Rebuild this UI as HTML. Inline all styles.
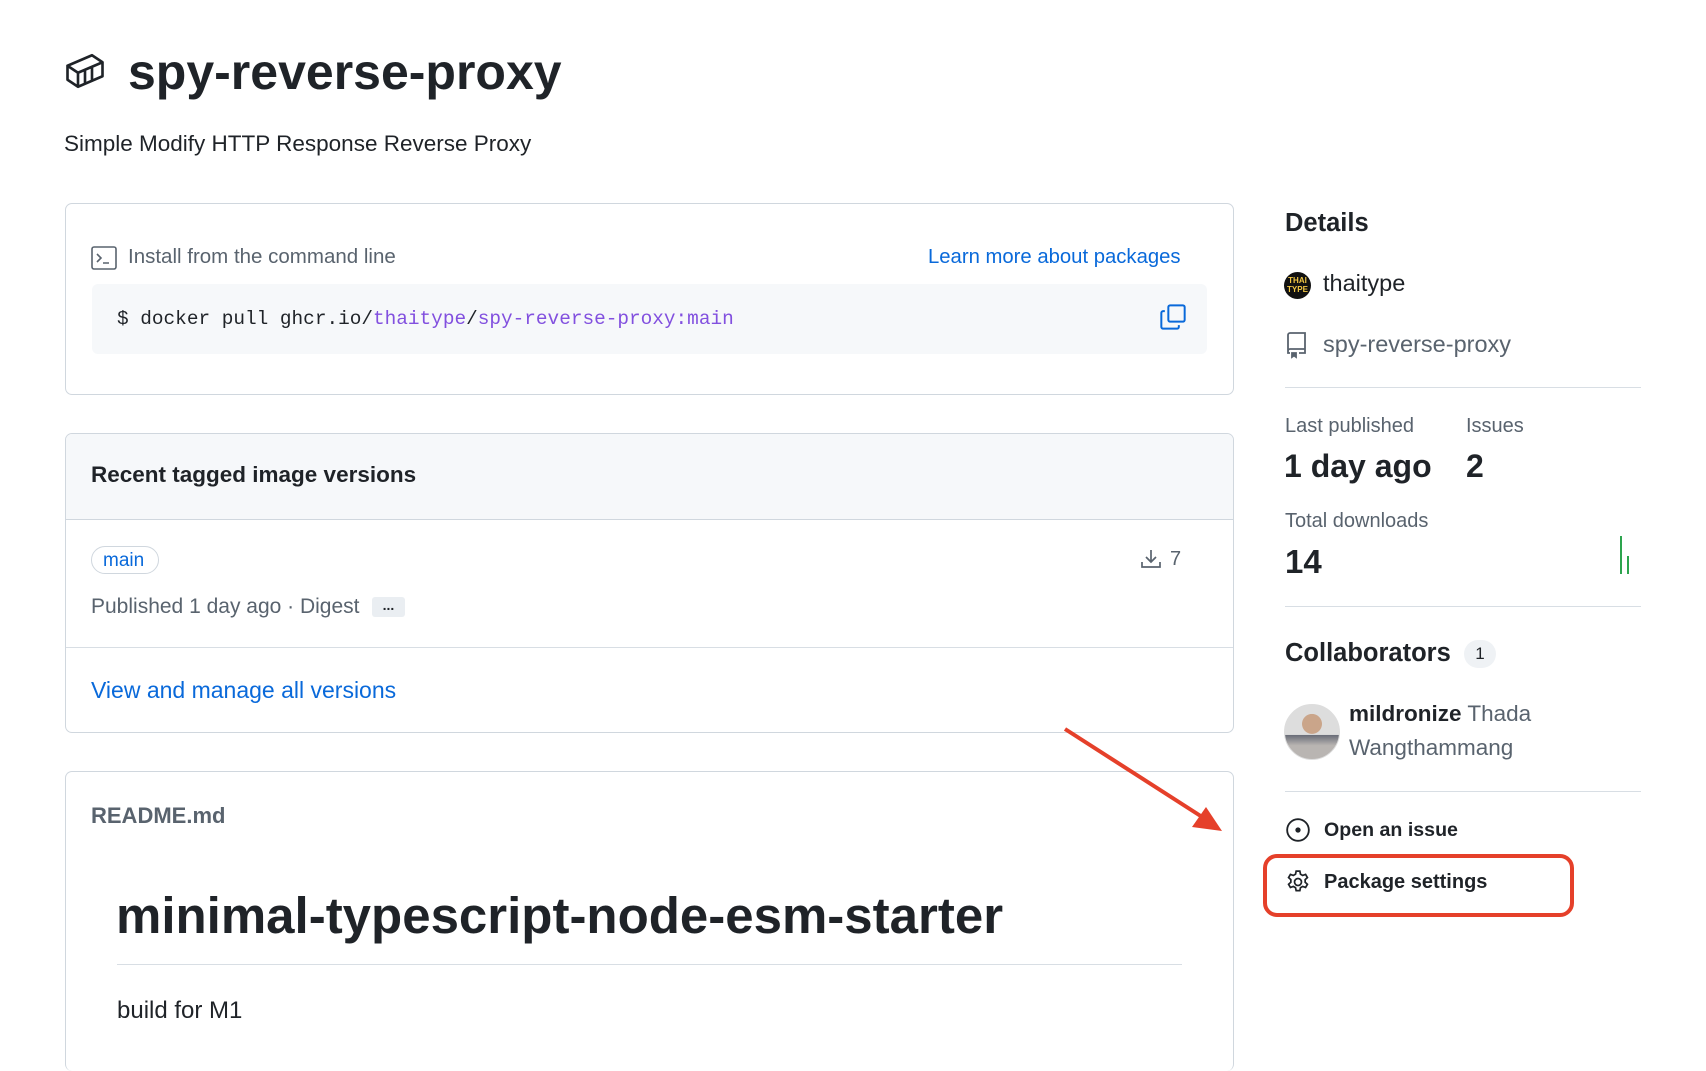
<!DOCTYPE html><html><head><meta charset="utf-8"><style>
body{margin:0;width:1706px;height:1034px;overflow:hidden;background:#fff;font-family:"Liberation Sans",Arial,sans-serif;color:#1f2328;position:relative}
.a{position:absolute;white-space:nowrap;line-height:30px}
.box{position:absolute;border:1px solid #d0d7de;border-radius:7px;box-sizing:border-box}
.hr{position:absolute;height:1px;background:#d8dee4}
.mono{font-family:"Liberation Mono",monospace}
.b{font-weight:bold}.m{color:#59636e}.l{color:#0969da}
</style></head><body>
<svg class="a" style="left:64px;top:50px" width="42" height="42" viewBox="0 0 24 24" fill="none" stroke="#1f2328" stroke-width="1.5" stroke-linejoin="round"><path d="M2 9l6 4 14-6-6-4z M2 9v8l6 4 14-6V7 M8 13v8 M12 11.3v8 M16 9.6v8"/></svg>
<div class="a b" style="left:128px;top:43px;font-size:50px;line-height:58px">spy-reverse-proxy</div>
<div class="a" style="left:64px;top:129px;font-size:22.5px">Simple Modify HTTP Response Reverse Proxy</div>

<div class="box" style="left:65px;top:203px;width:1169px;height:192px"></div>
<svg class="a" style="left:91px;top:246px" width="26" height="24" viewBox="0 0 26 24" fill="none" stroke="#59636e" stroke-width="1.6"><rect x="1" y="1" width="24" height="22" rx="2"/><path d="M6 8l4 4-4 4M12 17h6"/></svg>
<div class="a m" style="left:128px;top:242px;font-size:20.5px">Install from the command line</div>
<div class="a l" style="left:928px;top:242px;font-size:20.3px">Learn more about packages</div>
<div class="a" style="left:92px;top:284px;width:1115px;height:70px;background:#f6f8fa;border-radius:6px"></div>
<div class="a mono" style="left:117px;top:304px;font-size:19.4px">$ docker pull ghcr.io/<span style="color:#8250df">thaitype</span>/<span style="color:#8250df">spy-reverse-proxy:main</span></div>
<svg class="a" style="left:1159px;top:303px" width="28" height="28" viewBox="0 0 24 24" fill="none" stroke="#0969da" stroke-width="1.7"><rect x="8" y="2" width="14" height="14" rx="1.5"/><path d="M5 7H3.5A1.5 1.5 0 002 8.5v12A1.5 1.5 0 003.5 22h12a1.5 1.5 0 001.5-1.5V19"/></svg>

<div class="box" style="left:65px;top:433px;width:1169px;height:300px;overflow:hidden"><div style="height:85px;background:#f6f8fa;border-bottom:1px solid #d0d7de"></div><div style="position:absolute;top:213px;left:0;right:0;height:1px;background:#d8dee4"></div></div>
<div class="a b" style="left:91px;top:460px;font-size:22.5px">Recent tagged image versions</div>
<div class="a l" style="left:91px;top:546px;height:28px;line-height:28px;padding:0 11px;border:1px solid #d0d7de;border-radius:14px;font-size:19px;box-sizing:border-box;width:68px">main</div>
<svg class="a" style="left:1139px;top:547px" width="24" height="24" viewBox="0 0 24 24" fill="none" stroke="#59636e" stroke-width="1.7"><path d="M12 3v12M7 10l5 5 5-5M3 15v5h18v-5"/></svg>
<div class="a m" style="left:1170px;top:544px;font-size:20px">7</div>
<div class="a m" style="left:91px;top:592px;font-size:21px">Published 1 day ago · Digest</div>
<div class="a" style="left:372px;top:597px;width:33px;height:20px;background:#eaeef2;border-radius:3px;font-size:14px;line-height:16px;text-align:center;font-weight:bold">...</div>
<div class="a l" style="left:91px;top:675px;font-size:23px">View and manage all versions</div>

<div class="box" style="left:65px;top:771px;width:1169px;height:300px;border-bottom:none"></div>
<div class="a b m" style="left:91px;top:801px;font-size:22px">README.md</div>
<div class="a b" style="left:116px;top:887px;font-size:51px;line-height:58px">minimal-typescript-node-esm-starter</div>
<div class="hr" style="left:117px;top:964px;width:1065px"></div>
<div class="a" style="left:117px;top:996px;font-size:24px">build for M1</div>

<div class="a b" style="left:1285px;top:208px;font-size:25.5px">Details</div>
<div class="a" style="left:1284px;top:272px;width:27px;height:27px;border-radius:50%;background:#111;color:#f2c744;font-size:8px;line-height:9px;text-align:center;font-weight:bold;padding-top:4px;box-sizing:border-box">THAI<br>TYPE</div>
<div class="a" style="left:1323px;top:268px;font-size:23.5px">thaitype</div>
<svg class="a" style="left:1284px;top:331px" width="24" height="28" viewBox="0 0 24 28" fill="none" stroke="#59636e" stroke-width="1.8"><path d="M6 22H4V4a2 2 0 012-2h15v20h-6M4 20a2 2 0 012-2h15"/><path d="M8 22v4l2-1.5 2 1.5v-4z" fill="#59636e"/></svg>
<div class="a m" style="left:1323px;top:329px;font-size:23.5px">spy-reverse-proxy</div>
<div class="hr" style="left:1285px;top:387px;width:356px"></div>
<div class="a m" style="left:1285px;top:411px;font-size:20px">Last published</div>
<div class="a m" style="left:1466px;top:411px;font-size:20px">Issues</div>
<div class="a b" style="left:1284px;top:446px;font-size:32px;line-height:40px">1 day ago</div>
<div class="a b" style="left:1466px;top:446px;font-size:32px;line-height:40px">2</div>
<div class="a m" style="left:1285px;top:506px;font-size:20px">Total downloads</div>
<div class="a b" style="left:1285px;top:542px;font-size:33px;line-height:40px">14</div>
<div class="a" style="left:1620px;top:536px;width:2px;height:38px;background:#2da44e"></div>
<div class="a" style="left:1627px;top:556px;width:2px;height:18px;background:#2da44e"></div>
<div class="hr" style="left:1285px;top:606px;width:356px"></div>
<div class="a b" style="left:1285px;top:638px;font-size:25.5px">Collaborators</div>
<div class="a" style="left:1464px;top:640px;width:32px;height:28px;border-radius:14px;background:#eff2f5;font-size:17px;line-height:28px;text-align:center">1</div>
<div class="a" style="left:1284px;top:704px;width:54px;height:54px;border-radius:50%;background:radial-gradient(circle at 50% 35%,#caa58a 0 22%,transparent 23%),linear-gradient(#ddd 55%,#6a6d78 56%,#b9b5b2 75%);border:1px solid #ddd"></div>
<div class="a" style="left:1349px;top:699px;font-size:22.5px"><b>mildronize</b> <span class="m">Thada</span></div>
<div class="a m" style="left:1349px;top:733px;font-size:22.5px">Wangthammang</div>
<div class="hr" style="left:1285px;top:791px;width:356px"></div>
<svg class="a" style="left:1285px;top:817px" width="26" height="26" viewBox="0 0 24 24" fill="none" stroke="#1f2328" stroke-width="1.7"><circle cx="12" cy="12" r="10"/><circle cx="12" cy="12" r="1.6" fill="#1f2328"/></svg>
<div class="a b" style="left:1324px;top:815px;font-size:19.6px">Open an issue</div>
<svg class="a" style="left:1285px;top:869px" width="26" height="26" viewBox="0 0 24 24" fill="none" stroke="#1f2328" stroke-width="1.6"><circle cx="12" cy="12" r="3.2"/><path d="M10.3 2h3.4l.6 2.8 2 1.1 2.7-.9 1.7 2.9-2.1 1.9v2.4l2.1 1.9-1.7 2.9-2.7-.9-2 1.1-.6 2.8h-3.4l-.6-2.8-2-1.1-2.7.9-1.7-2.9 2.1-1.9v-2.4L3.3 7.9 5 5l2.7.9 2-1.1z"/></svg>
<div class="a b" style="left:1324px;top:867px;font-size:20px">Package settings</div>
<div class="a" style="left:1263px;top:854px;width:311px;height:63px;border:4px solid #e5402a;border-radius:14px;box-sizing:border-box"></div>
<svg class="a" style="left:1060px;top:724px" width="170" height="115"><line x1="5" y1="5" x2="150" y2="98" stroke="#e5402a" stroke-width="4"/><path d="M162 107l-30-4 14-20z" fill="#e5402a"/></svg>
</body></html>
